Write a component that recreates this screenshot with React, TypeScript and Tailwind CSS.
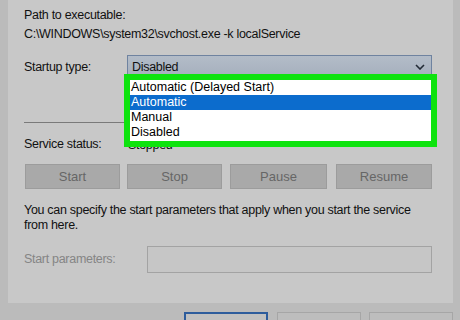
import React from "react";

export default function App() {
  const font = { fontFamily: '"Liberation Sans", Arial, sans-serif' };
  return (
    <div
      className="w-[460px] h-[320px] overflow-hidden bg-[#bbbbbb] flex flex-col pl-[8px] pr-[7px] text-[12.5px] tracking-[-0.3px] text-[#111111]"
      style={font}
    >
      {/* Panel */}
      <div className="h-[303px] shrink-0 bg-[#c8c8c8] pl-[16px] pr-[21px] pt-[7px] flex flex-col">
        <div className="h-[16px] leading-[16px]">Path to executable:</div>
        <div className="h-[16px] leading-[16px] mt-[3px]">C:\WINDOWS\system32\svchost.exe -k localService</div>

        {/* Startup type */}
        <div className="flex mt-[13px] h-[22px]">
          <div className="w-[103px] leading-[22px] pt-[1px]">Startup type:</div>
          <div className="relative flex-1">
            <div className="h-[22px] border border-[#6f83a0] bg-gradient-to-b from-[#b3bcc8] to-[#a6b0bd] flex items-center justify-between pl-[4px] pr-[6px]">
              <span className="pt-[2px]">Disabled</span>
              <svg width="10" height="6" viewBox="0 0 10 6" className="mt-[2px]">
                <path d="M1 1 L5 5 L9 1" fill="none" stroke="#222b36" strokeWidth="1.6" />
              </svg>
            </div>
            {/* Dropdown list */}
            <div className="absolute left-[-3px] top-[19px] w-[313px] h-[73px] border-[6px] border-[#0ee30e] bg-white z-10 flex flex-col text-[12.5px] tracking-normal text-black">
              <div className="h-[15px] leading-[15px] pl-[1px]">Automatic (Delayed Start)</div>
              <div className="h-[15px] leading-[15px] pl-[1px] bg-[#0c6ccd] text-white">Automatic</div>
              <div className="h-[15px] leading-[15px] pl-[1px]">Manual</div>
              <div className="h-[15px] leading-[15px] pl-[1px]">Disabled</div>
            </div>
          </div>
        </div>

        {/* Separator */}
        <div className="mt-[45px] h-px bg-[#7a7a7a]" />

        {/* Service status */}
        <div className="flex mt-[13px] h-[16px] leading-[16px]">
          <div className="w-[104px]">Service status:</div>
          <div className="pt-[1px]">Stopped</div>
        </div>

        {/* Buttons */}
        <div className="flex mt-[12px] h-[25px] pl-[1px] text-[#666666] text-[13px] tracking-normal">
          <div className="w-[95px] border border-[#9c9c9c] bg-[#a9a9a9] flex items-center justify-center">Start</div>
          <div className="w-[95px] ml-[7px] border border-[#9c9c9c] bg-[#a9a9a9] flex items-center justify-center">Stop</div>
          <div className="w-[97px] ml-[8px] border border-[#9c9c9c] bg-[#a9a9a9] flex items-center justify-center">Pause</div>
          <div className="flex-1 ml-[9px] border border-[#9c9c9c] bg-[#a9a9a9] flex items-center justify-center">Resume</div>
        </div>

        {/* Description */}
        <div className="mt-[14px] leading-[15px] pr-[4px]">
          You can specify the start parameters that apply when you start the service from here.
        </div>

        {/* Start parameters */}
        <div className="flex mt-[13px] h-[27px]">
          <div className="w-[123px] leading-[27px] text-[#858585]">Start parameters:</div>
          <div className="flex-1 border border-[#a3a3a3] bg-[#c6c6c6]" />
        </div>
      </div>

      {/* Bottom buttons */}
      <div className="flex justify-end mt-[9px] gap-[8px] text-[13px] tracking-normal">
        <div className="w-[84px] h-[24px] border-2 border-[#2d5c9c] bg-[#c0c0c0] flex items-center justify-center pt-[2px] text-[#222222]">OK</div>
        <div className="w-[84px] h-[24px] ml-[1px] border border-[#a6a6a6] bg-[#bdbdbd] flex items-center justify-center pt-[2px] text-[#7a7a7a]">Cancel</div>
        <div className="w-[84px] h-[24px] border border-[#a6a6a6] bg-[#bdbdbd] flex items-center justify-center pt-[2px] text-[#7a7a7a]">Apply</div>
      </div>
    </div>
  );
}
